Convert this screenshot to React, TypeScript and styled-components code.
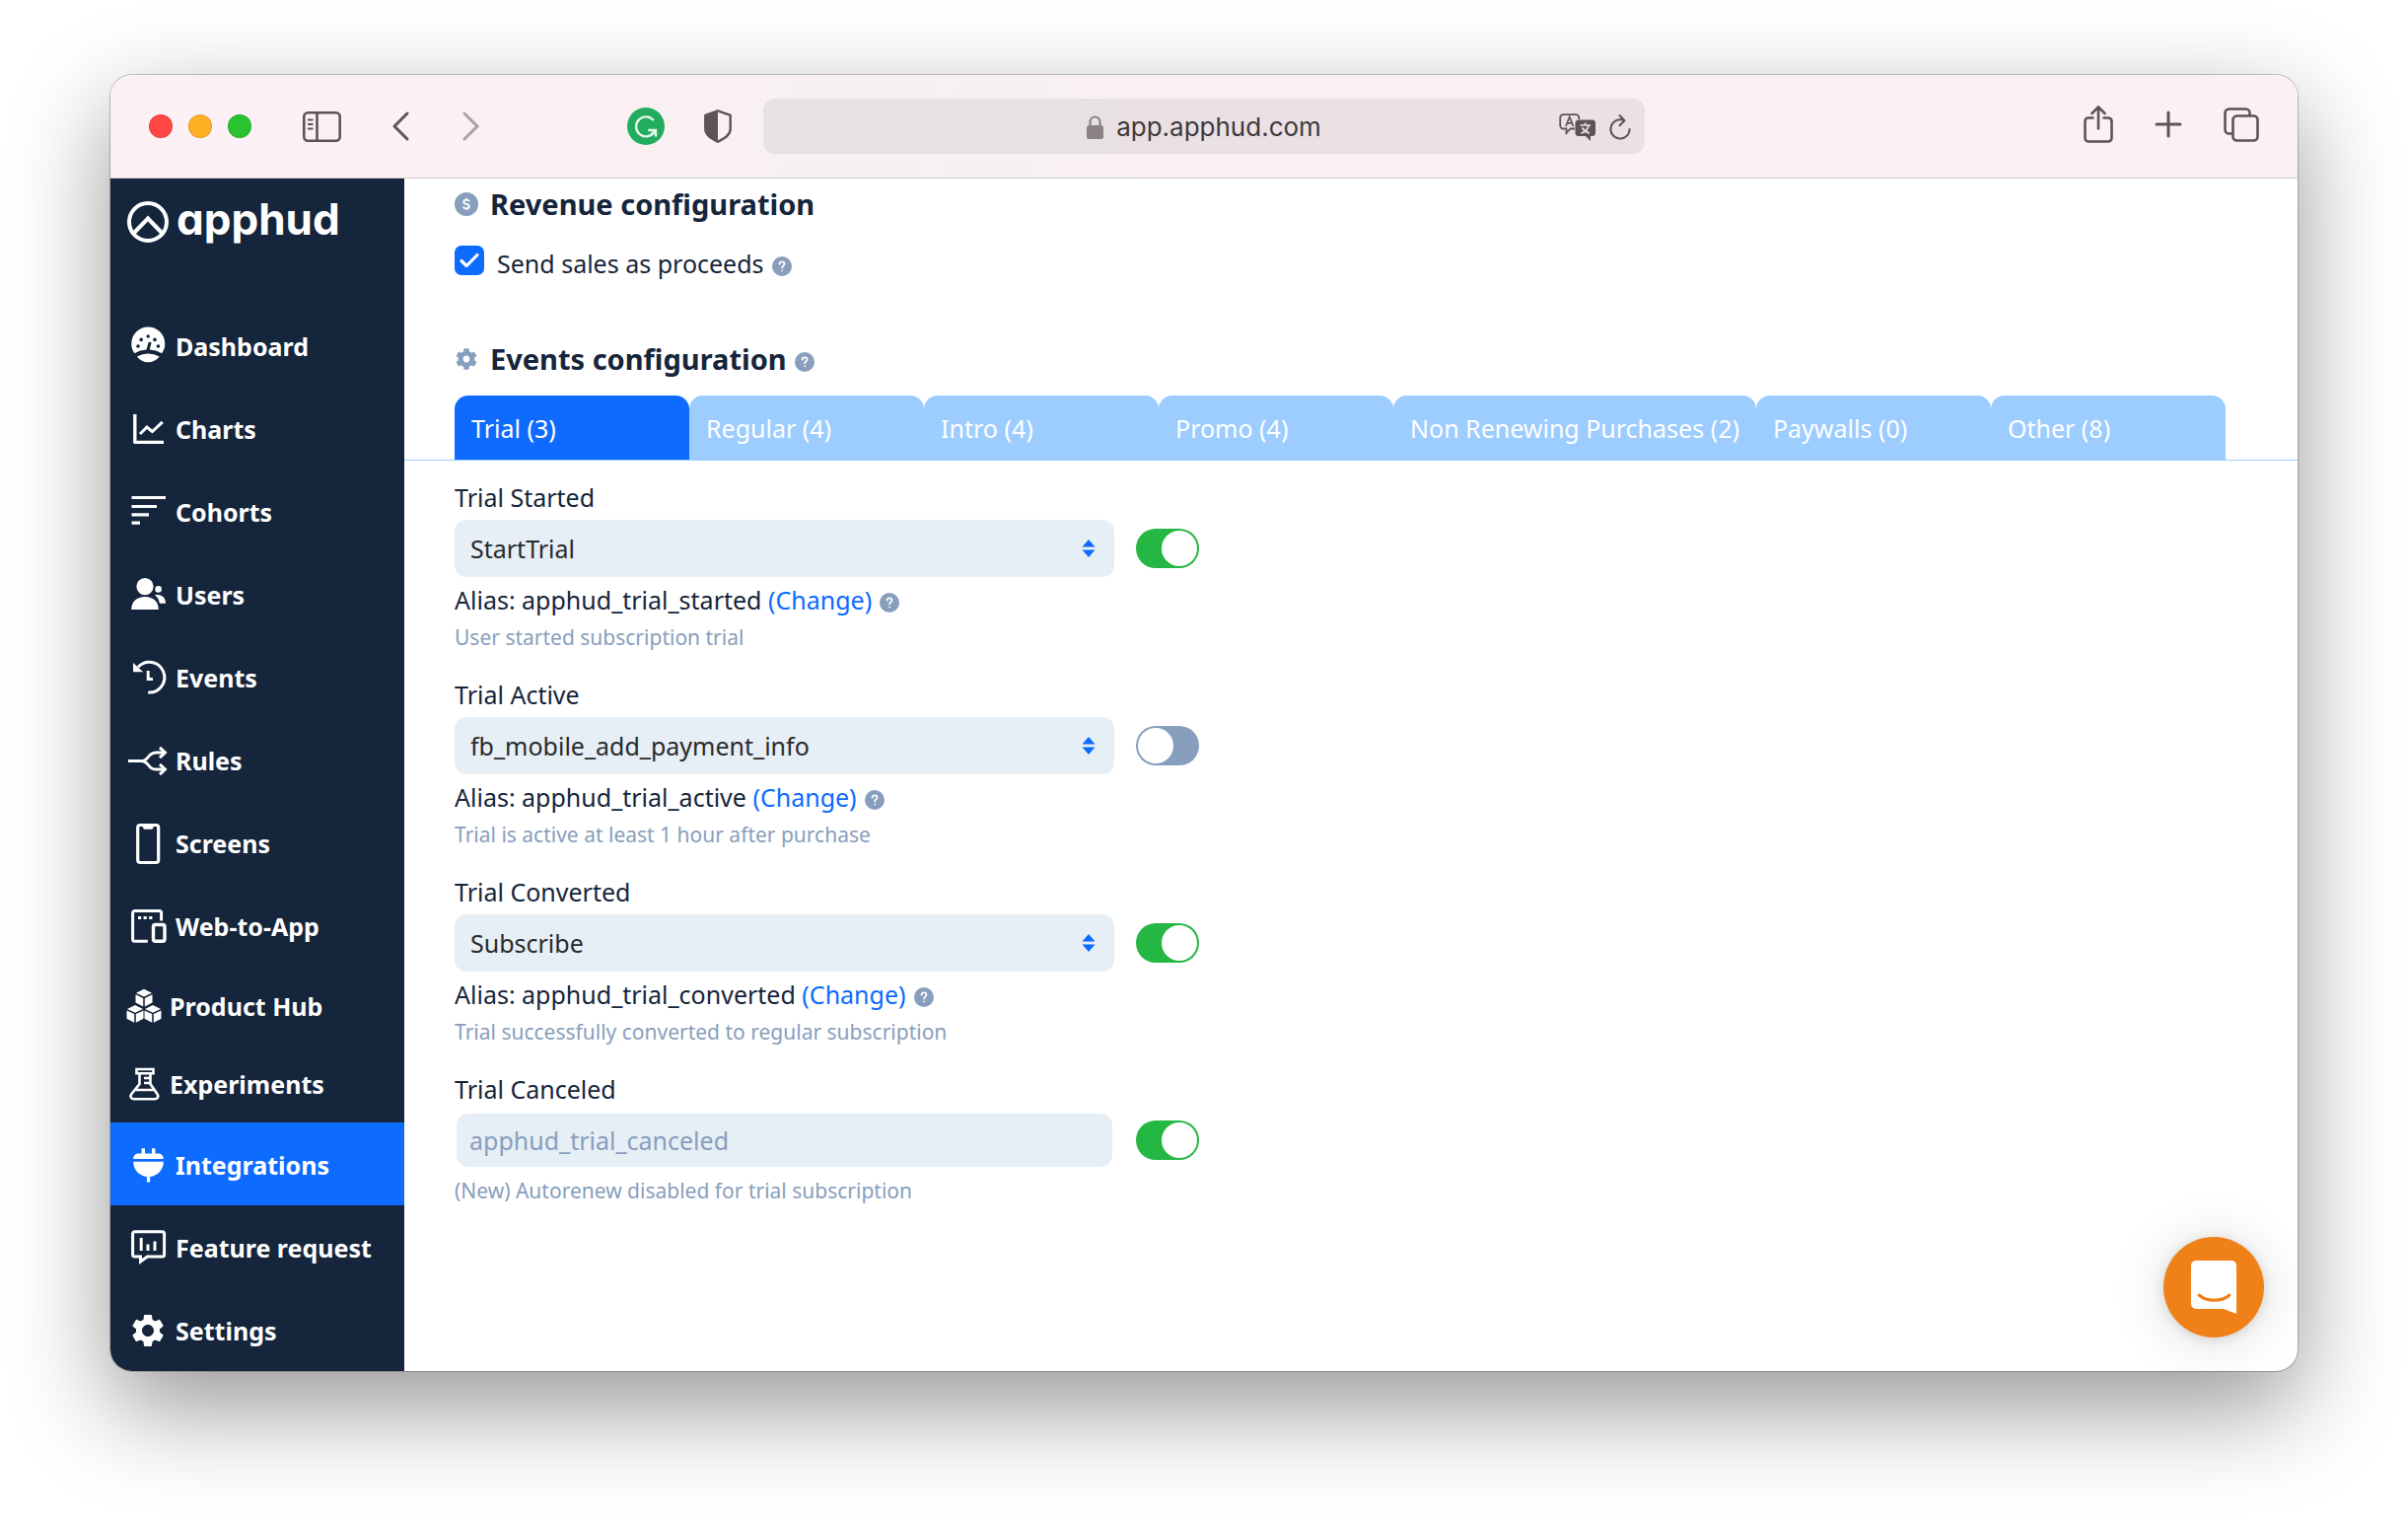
import React from 'react';
import styled, { createGlobalStyle } from 'styled-components';
import { MdSettings } from 'react-icons/md';
import { FaCog } from 'react-icons/fa';

const color = {
  navy: '#15253b',
  blue: '#0d6bff',
  lightBlue: '#9dccff',
  field: '#e6eef6',
  muted: '#889ebd',
  green: '#24b743',
  orange: '#f08018',
  chrome: '#fbf0f4',
  chromeIcon: '#5c5456',
};

const GlobalStyle = createGlobalStyle`
  *, *::before, *::after { box-sizing: border-box; }
  body {
    margin: 0;
    background: #fff;
    color: ${color.navy};
    font-family: "Noto Sans", "Open Sans", sans-serif;
    font-size: 25px;
    line-height: 32px;
  }
  button, input, select { font: inherit; }
  svg { display: block; flex: none; overflow: visible; }
`;

const Desktop = styled.div`
  padding: 76px 112px 148px;
`;

const BrowserWindow = styled.div`
  overflow: hidden;
  border-radius: 22px;
  background: #fff;
  box-shadow: 0 0 0 1px rgba(0, 0, 0, 0.22), 0 36px 100px rgba(0, 0, 0, 0.42);
`;

const Toolbar = styled.header`
  display: grid;
  grid-template-columns: 1fr minmax(0, 894px) 1fr;
  column-gap: 32px;
  align-items: center;
  height: 105px;
  padding: 0 39px;
  border-bottom: 1px solid #cfcacc;
  background: linear-gradient(100deg, ${color.chrome} 15%, #faf0f1 24%, #f6f1f3 38%, ${color.chrome} 50%);
  color: ${color.chromeIcon};
`;

const ToolGroup = styled.div<{ $gap: number }>`
  display: flex;
  align-items: center;
  gap: ${(p) => p.$gap}px;
`;

const ToolSide = styled.div<{ $end?: boolean }>`
  display: flex;
  align-items: center;
  justify-content: ${(p) => (p.$end ? 'flex-end' : 'space-between')};
  padding-bottom: ${(p) => (p.$end ? 4 : 0)}px;
`;

const Light = styled.button<{ $fill: string }>`
  width: 24px;
  height: 24px;
  padding: 0;
  border: 1px solid rgba(0, 0, 0, 0.1);
  border-radius: 50%;
  background: ${(p) => p.$fill};
`;

const ToolButton = styled.button<{ $dim?: boolean }>`
  padding: 0;
  border: 0;
  background: none;
  color: inherit;
  opacity: ${(p) => (p.$dim ? 0.5 : 1)};
`;

const AddressBar = styled.div`
  display: grid;
  grid-template-columns: 1fr auto 1fr;
  align-items: center;
  height: 56px;
  padding: 2px 14px 0;
  border-radius: 12px;
  background: linear-gradient(100deg, #e6e1e2 30%, #ebe0e4 50%);
`;

const Address = styled.div`
  grid-column: 2;
  display: flex;
  align-items: center;
  gap: 13px;
  color: #3e393b;
  font-family: Inter, Roboto, sans-serif;
  font-size: 26px;
`;

const AddressTools = styled.div`
  display: flex;
  align-items: center;
  justify-content: flex-end;
  gap: 14px;
`;

const Body = styled.div`
  display: flex;
`;

const Sidebar = styled.aside`
  flex: none;
  width: 298px;
  padding-top: 23px;
  background: ${color.navy};
  color: #fff;
`;

const Logo = styled.a`
  display: flex;
  align-items: flex-start;
  gap: 8px;
  height: 42px;
  margin: 0 0 62px 17px;
  color: #fff;
  font-family: Inter, "Open Sans", sans-serif;
  font-feature-settings: "cv11";
  font-size: 44px;
  font-weight: 700;
  line-height: 36px;
  text-decoration: none;
`;

const NavItem = styled.a<{ $compact?: boolean; $active?: boolean }>`
  display: flex;
  align-items: center;
  gap: ${(p) => (p.$compact ? 8 : 10)}px;
  height: ${(p) => (p.$compact ? 79 : 84)}px;
  padding: ${(p) => (p.$compact ? '0 0 0 16px' : '2px 0 0 20px')};
  background: ${(p) => (p.$active ? color.blue : 'transparent')};
  color: #fff;
  font-weight: 700;
  text-decoration: none;
  white-space: nowrap;
`;

const Main = styled.main`
  position: relative;
  flex: 1;
  min-width: 0;
  padding-top: 6px;
`;

const Section = styled.section`
  padding: 0 51px;
`;

const HeadingRow = styled.div`
  display: flex;
  align-items: center;
  gap: 12px;
  height: 40px;
  color: ${color.muted};
`;

const HeadingIcon = styled.span`
  display: flex;
  justify-content: center;
  width: 24px;
`;

const Heading = styled.h2`
  margin: 0;
  color: ${color.navy};
  font-size: 29px;
  line-height: 40px;
`;

const CheckRow = styled.div`
  display: flex;
  gap: 13px;
  margin: 22px 0 59px;
  line-height: 36px;
`;

const CheckBox = styled.span`
  display: grid;
  place-items: center;
  width: 30px;
  height: 30px;
  > * { grid-area: 1 / 1; }
  > svg { pointer-events: none; }
`;

const CheckInput = styled.input`
  appearance: none;
  width: 30px;
  height: 30px;
  margin: 0;
  border-radius: 7px;
  background: ${color.blue};
`;

const HelpButton = styled.button`
  width: 20px;
  height: 20px;
  margin-left: 8px;
  padding: 0;
  border: 0;
  border-radius: 50%;
  background: ${color.muted};
  vertical-align: middle;
`;

const Tabs = styled.div`
  display: flex;
  height: 66px;
  margin-top: 17px;
  padding: 0 51px;
  border-bottom: 1px solid ${color.lightBlue};
`;

const Tab = styled.button<{ $active?: boolean }>`
  min-width: 238px;
  padding: 0 17px;
  border: 0;
  border-radius: 14px 14px 0 0;
  background: ${(p) => (p.$active ? color.blue : color.lightBlue)};
  color: #fff;
  text-align: left;
  white-space: nowrap;
`;

const EventList = styled.div`
  display: flex;
  flex-direction: column;
  gap: 27px;
  padding: 21px 51px;
`;

const EventBlock = styled.div`
  display: flex;
  flex-direction: column;
  gap: 7px;
`;

const ControlRow = styled.div`
  display: flex;
  align-items: center;
  gap: 22px;
  height: 58px;
`;

const SelectBox = styled.div`
  display: grid;
  align-items: center;
  width: 669px;
  > * { grid-area: 1 / 1; }
  > svg { justify-self: end; margin-right: 19px; pointer-events: none; }
`;

const Select = styled.select`
  appearance: none;
  width: 100%;
  height: 58px;
  padding: 0 16px;
  border: 0;
  border-radius: 12px;
  background: ${color.field};
  color: #2a2a2a;
`;

const InputBox = styled.div`
  width: 669px;
  padding: 0 2px;
`;

const TextInput = styled.input`
  display: block;
  width: 100%;
  height: 54px;
  padding: 0 13px;
  border: 0;
  border-radius: 12px;
  background: ${color.field};
  &::placeholder { color: ${color.muted}; opacity: 1; }
`;

const Toggle = styled.input`
  appearance: none;
  display: flex;
  width: 64px;
  height: 40px;
  margin: 0;
  padding: 2px;
  border-radius: 20px;
  background: ${color.muted};
  &::before {
    content: "";
    width: 36px;
    height: 36px;
    border-radius: 50%;
    background: #fff;
  }
  &:checked { justify-content: flex-end; background: ${color.green}; }
`;

const Change = styled.a`
  color: ${color.blue};
  text-decoration: none;
`;

const Description = styled.div`
  color: ${color.muted};
  font-size: 21px;
  line-height: 30px;
`;

const ChatButton = styled.button`
  position: absolute;
  right: 34px;
  bottom: 34px;
  display: grid;
  place-items: center;
  width: 102px;
  height: 102px;
  padding: 0;
  border: 0;
  border-radius: 50%;
  background: ${color.orange};
  box-shadow: 0 2px 12px rgba(0, 0, 0, 0.12), 0 4px 56px rgba(0, 0, 0, 0.14);
`;

const QuestionGlyph = () => (
  <svg width="20" height="20" viewBox="0 0 20 20" fill="none" stroke="#fff" strokeWidth="1.8" strokeLinecap="round">
    <path d="M7.6 7.6c.1-1.5 1.1-2.3 2.5-2.3s2.4.9 2.4 2.2c0 1.8-2.3 1.9-2.3 3.9" />
    <circle cx="10.1" cy="14.4" r=".5" fill="#fff" strokeWidth="1" />
  </svg>
);

const Help = () => (
  <HelpButton type="button" aria-label="Help">
    <QuestionGlyph />
  </HelpButton>
);

const Icon = ({ children }: { children: React.ReactNode }) => (
  <svg width="36" height="36" viewBox="0 0 36 36" fill="none" stroke="#fff" strokeWidth="3">
    {children}
  </svg>
);

const icons: Record<string, React.ReactNode> = {
  dashboard: (
    <Icon>
      <path
        d="M4.3 25.2A17 17 0 1 1 32.2 25.2Q26 21.9 19.7 21.6L20.6 14.4 18.6 14 16.6 21.6Q10 21.9 4.3 25.2z"
        fill="#fff"
        stroke="none"
      />
      <path d="M6.8 28.4Q18.2 22.6 29.7 28.4Q25 34.2 18.2 34.2T6.8 28.4z" fill="#fff" stroke="none" />
      <path d="M20.4 14l-2.600 9" stroke={color.navy} strokeWidth="2.600" />
      <path d="M4 27.400Q18.200 19.400 32.400 27.400" stroke={color.navy} strokeWidth="2.200" />
      <g fill={color.navy} stroke="none">
        <circle cx="8" cy="18" r="1.8" />
        <circle cx="11.2" cy="11.4" r="1.8" />
        <circle cx="18.2" cy="8" r="1.8" />
        <circle cx="25" cy="11.4" r="1.8" />
        <circle cx="28.4" cy="18" r="1.8" />
      </g>
    </Icon>
  ),
  charts: (
    <Icon>
      <path d="M4.8 3v28.4H34" strokeWidth="3.4" strokeLinejoin="round" />
      <path d="M10 23l7-7 5.4 4.6 10.4-9.8" />
    </Icon>
  ),
  cohorts: (
    <Icon>
      <path d="M1.5 3.5H36M1.5 12.5H27M1.5 20.8H19M1.5 29.2H10" strokeWidth="3.2" />
    </Icon>
  ),
  users: (
    <Icon>
      <g fill="#fff" stroke="none">
        <circle cx="15" cy="9.6" r="8.6" />
        <path d="M1.2 33c0-8 5.6-13 13.8-13s13.8 5 13.8 13z" />
        <circle cx="28.6" cy="12.4" r="3.3" />
        <path d="M25 18.2c6.800-1.400 11 2.400 11 8.600h-6.200c-.4-3.600-2-6.400-4.800-8.600z" />
      </g>
    </Icon>
  ),
  events: (
    <Icon>
      <path d="M8 7.300A15.400 15.400 0 1 1 18.200 33" />
      <path d="M3 3l10.200 9.200H3z" fill="#fff" stroke="none" />
      <path d="M18.200 11v8.500H23" />
    </Icon>
  ),
  rules: (
    <Icon>
      <path d="M-2 18.500h13c9 0 6-8.500 15-8.500h8M11 18.500c9 0 6 8.500 15 8.500h8" />
      <path d="M30 4.800l5.400 5.200-5.400 5.200M30 21.800l5.400 5.200-5.400 5.200" />
    </Icon>
  ),
  screens: (
    <Icon>
      <rect x="7.700" y="-.5" width="21" height="38" rx="2.500" strokeWidth="3.200" />
      <path d="M12 0h12.500l-2 3.800h-8.500z" fill="#fff" stroke="none" />
    </Icon>
  ),
  web: (
    <Icon>
      <path d="M17.800 33.200H4.600a2 2 0 0 1-2-2V4.600a2 2 0 0 1 2-2h25a2 2 0 0 1 2 2v8" />
      <rect x="23.500" y="16.500" width="11.500" height="16.700" rx="2" strokeWidth="3.400" />
      <path d="M8 9.600h3.200M13.600 9.600h3.200M19.200 9.600h3.200" strokeWidth="3" />
    </Icon>
  ),
  cubes: (
    <Icon>
      <g fill="#fff" stroke="none">
        {[
          [18, 0.8],
          [9, 17],
          [27, 17],
        ].map(([x, y]) => (
          <g key={x} transform={`translate(${x} ${y})`}>
            <path d="M0 0l8 3.900-8 3.900-8-3.900z" />
            <path d="M-8.500 5.400l7.700 3.700v8.600l-7.700-3.900zM8.500 5.400L.8 9.100v8.600l7.700-3.900z" />
          </g>
        ))}
      </g>
    </Icon>
  ),
  flask: (
    <Icon>
      <path d="M10.500 3h17v4.200h-17zM13.500 7.500v10.500L5.400 28c-1.800 2.400-.6 5.200 2.200 5.200h21.600c2.800 0 4-2.800 2.200-5.200L24.500 18V7.500M9.500 24h18.500" strokeWidth="2.600" />
      <path d="M18 12h6M18 17h6" strokeWidth="2.400" />
    </Icon>
  ),
  plug: (
    <Icon>
      <g fill="#fff" stroke="none">
        <path d="M3.200 12c0-3.600 2.200-5.600 5.800-5.600h2.600V1.200h3.400v5.200h7V1.200h3.400v5.200h2.600c3.600 0 5.800 2 5.800 5.600z" />
        <path d="M3.200 14.800h30.600c0 8-5.600 14.400-13.700 15.200v5.400h-3.200V30C8.800 29.200 3.200 22.800 3.200 14.800z" />
      </g>
    </Icon>
  ),
  feature: (
    <Icon>
      <path d="M4.600 1.700h28a2 2 0 0 1 2 2v21.400a2 2 0 0 1-2 2H17.500L10.500 32v-4.900H4.600a2 2 0 0 1-2-2V3.700a2 2 0 0 1 2-2z" />
      <path d="M11.200 8v13M18 14.600V21M25 11.500V21" />
    </Icon>
  ),
  settings: <MdSettings size={36} viewBox="1.2 1.2 21.6 21.6" />,
};

type NavEntry = { label: string; icon: string; compact?: boolean; active?: boolean };

const nav: NavEntry[] = [
  { label: 'Dashboard', icon: 'dashboard' },
  { label: 'Charts', icon: 'charts' },
  { label: 'Cohorts', icon: 'cohorts' },
  { label: 'Users', icon: 'users' },
  { label: 'Events', icon: 'events' },
  { label: 'Rules', icon: 'rules' },
  { label: 'Screens', icon: 'screens' },
  { label: 'Web-to-App', icon: 'web' },
  { label: 'Product Hub', icon: 'cubes', compact: true },
  { label: 'Experiments', icon: 'flask', compact: true },
  { label: 'Integrations', icon: 'plug', active: true },
  { label: 'Feature request', icon: 'feature' },
  { label: 'Settings', icon: 'settings' },
];

const tabs = [
  'Trial (3)',
  'Regular (4)',
  'Intro (4)',
  'Promo (4)',
  'Non Renewing Purchases (2)',
  'Paywalls (0)',
  'Other (8)',
];

type EventEntry = { id: string; title: string; value?: string; on: boolean; description: string };

const events: EventEntry[] = [
  { id: 'apphud_trial_started', title: 'Trial Started', value: 'StartTrial', on: true, description: 'User started subscription trial' },
  { id: 'apphud_trial_active', title: 'Trial Active', value: 'fb_mobile_add_payment_info', on: false, description: 'Trial is active at least 1 hour after purchase' },
  { id: 'apphud_trial_converted', title: 'Trial Converted', value: 'Subscribe', on: true, description: 'Trial successfully converted to regular subscription' },
  { id: 'apphud_trial_canceled', title: 'Trial Canceled', on: true, description: '(New) Autorenew disabled for trial subscription' },
];

const EventSetting = ({ event }: { event: EventEntry }) => (
  <EventBlock>
    <label htmlFor={event.id}>{event.title}</label>
    <ControlRow>
      {event.value ? (
        <SelectBox>
          <Select id={event.id} defaultValue={event.value}>
            <option>{event.value}</option>
          </Select>
          <svg width="14" height="18" viewBox="0 0 14 18" fill={color.blue}>
            <path d="M7 0l6.500 7.500H.5zM7 18l6.500-7.500H.5z" />
          </svg>
        </SelectBox>
      ) : (
        <InputBox>
          <TextInput id={event.id} placeholder={event.id} />
        </InputBox>
      )}
      <Toggle type="checkbox" role="switch" aria-label={event.title} defaultChecked={event.on} />
    </ControlRow>
    {event.value && (
      <div>
        Alias: {event.id} <Change href="#change">(Change)</Change>
        <Help />
      </div>
    )}
    <Description>{event.description}</Description>
  </EventBlock>
);

const BrowserToolbar = () => (
  <Toolbar>
    <ToolSide>
      <ToolGroup $gap={52}>
        <ToolGroup $gap={16}>
          <Light $fill="#ff4645" aria-label="Close" />
          <Light $fill="#fdb024" aria-label="Minimize" />
          <Light $fill="#29c231" aria-label="Zoom" />
        </ToolGroup>
        <ToolButton aria-label="Sidebar">
          <svg width="39" height="31" viewBox="0 0 39 31" fill="none" stroke="currentColor" strokeWidth="2.600">
            <rect x="1.300" y="1.300" width="36.400" height="28.400" rx="4" />
            <path d="M14.500 1.300v28.400" />
            <path d="M5 8.500h5.500M5 13h5.500M5 17.500h5.500" strokeWidth="2" />
          </svg>
        </ToolButton>
        <ToolGroup $gap={54}>
          <ToolButton aria-label="Back">
            <svg width="17" height="30" viewBox="0 0 17 30" fill="none" stroke="currentColor" strokeWidth="3" strokeLinecap="round" strokeLinejoin="round">
              <path d="M15 2L2 15l13 13" />
            </svg>
          </ToolButton>
          <ToolButton aria-label="Forward" $dim>
            <svg width="17" height="30" viewBox="0 0 17 30" fill="none" stroke="currentColor" strokeWidth="3" strokeLinecap="round" strokeLinejoin="round">
              <path d="M2 2l13 13L2 28" />
            </svg>
          </ToolButton>
        </ToolGroup>
      </ToolGroup>
      <ToolGroup $gap={40}>
        <ToolButton aria-label="Grammarly">
          <svg width="38" height="38" viewBox="0 0 38 38">
            <circle cx="19" cy="19" r="19" fill="#22ad5e" />
            <path d="M26.800 13A10 10 0 1 0 27 25.500" fill="none" stroke="#e9f7ef" strokeWidth="2.400" />
            <path d="M21.300 23h7.700v6.500M28.500 23.500l-4 4" fill="none" stroke="#e9f7ef" strokeWidth="2.400" />
          </svg>
        </ToolButton>
        <ToolButton aria-label="Privacy report">
          <svg width="28" height="34" viewBox="0 0 28 34">
            <path d="M14 1.300l12.700 4.500v14c0 6-6 9.500-12.700 12.900C7.300 29.300 1.300 25.800 1.300 19.800v-14z" fill="none" stroke="currentColor" strokeWidth="2.400" strokeLinejoin="round" />
            <path d="M14 1.300v31.400C7.300 29.300 1.300 25.800 1.300 19.800v-14z" fill="currentColor" />
          </svg>
        </ToolButton>
      </ToolGroup>
    </ToolSide>
    <AddressBar>
      <Address>
        <svg width="17" height="24" viewBox="0 0 17 24">
          <rect y="10" width="17" height="14" rx="2.500" fill="#8a8284" />
          <path d="M3.500 11V6.500a5 5 0 0 1 10 0V11" fill="none" stroke="#8a8284" strokeWidth="2.200" />
        </svg>
        app.apphud.com
      </Address>
      <AddressTools>
        <ToolButton aria-label="Translate">
          <svg width="37" height="28" viewBox="0 0 37 28">
            <path d="M16 15.500H11.500L7.500 20v-4.500H4.500a3.300 3.300 0 0 1-3.300-3.300V4.500a3.300 3.300 0 0 1 3.300-3.300h12.500a3.300 3.300 0 0 1 3.300 3.300V6" fill="none" stroke="currentColor" strokeWidth="1.800" />
            <path d="M7 13l3.700-9.500 3.800 9.500M8.300 9.800h4.800" fill="none" stroke="currentColor" strokeWidth="1.700" />
            <path d="M20 6.500h13.500A3.500 3.500 0 0 1 37 10v9.500a3.500 3.500 0 0 1-3.500 3.500H32v5l-5-5h-7a3.500 3.500 0 0 1-3.500-3.500V10A3.500 3.500 0 0 1 20 6.500z" fill="currentColor" />
            <path d="M21.500 12h10.500M26.700 9.500V12M23.500 14.500c1.500 2.500 4 4.500 7.500 5.500M30 12.500c-1 4-4 6.500-7.500 7.500" fill="none" stroke="#ebe0e4" strokeWidth="1.700" />
          </svg>
        </ToolButton>
        <ToolButton aria-label="Reload">
          <svg width="22" height="26" viewBox="0 0 22 26" fill="none" stroke="currentColor" strokeWidth="2" strokeLinecap="round" strokeLinejoin="round">
            <path d="M15 6.200A9.600 9.600 0 1 0 20.600 15M10.500 1l5 5.200-5 5" />
          </svg>
        </ToolButton>
      </AddressTools>
    </AddressBar>
    <ToolSide $end>
      <ToolGroup $gap={42}>
        <ToolButton aria-label="Share">
          <svg width="30" height="38" viewBox="0 0 30 38" fill="none" stroke="currentColor" strokeWidth="2.600" strokeLinecap="round" strokeLinejoin="round">
            <path d="M9.500 12.500H5a3.500 3.500 0 0 0-3.500 3.500v17A3.500 3.500 0 0 0 5 36.500h20a3.500 3.500 0 0 0 3.500-3.500V16a3.500 3.500 0 0 0-3.500-3.500h-4.500M15 23.500V1.500M8.500 8L15 1.500 21.500 8" />
          </svg>
        </ToolButton>
        <ToolButton aria-label="New tab">
          <svg width="28" height="28" viewBox="0 0 28 28" fill="none" stroke="currentColor" strokeWidth="3" strokeLinecap="round">
            <path d="M14 2v24M2 14h24" />
          </svg>
        </ToolButton>
        <ToolButton aria-label="Tab overview">
          <svg width="36" height="35" viewBox="0 0 36 35" fill="none" stroke="currentColor" strokeWidth="2.600" strokeLinejoin="round">
            <rect x="9.500" y="8.500" width="25" height="25" rx="4" />
            <path d="M9.500 26.500H5.500a4 4 0 0 1-4-4V5.500a4 4 0 0 1 4-4h17a4 4 0 0 1 4 4v3" />
          </svg>
        </ToolButton>
      </ToolGroup>
    </ToolSide>
  </Toolbar>
);

export default function App() {
  return (
    <Desktop>
      <GlobalStyle />
      <BrowserWindow>
        <BrowserToolbar />
        <Body>
          <Sidebar>
            <Logo href="#home">
              <svg width="42" height="42" viewBox="0 0 42 42" fill="none" stroke="#fff" strokeWidth="4">
                <circle cx="21" cy="21" r="19" />
                <path d="M6.500 32.500L21 17.500l14.500 15" />
              </svg>
              apphud
            </Logo>
            <nav>
              {nav.map((item) => (
                <NavItem key={item.label} href={`#${item.icon}`} $compact={item.compact} $active={item.active}>
                  {icons[item.icon]}
                  {item.label}
                </NavItem>
              ))}
            </nav>
          </Sidebar>
          <Main>
            <Section>
              <HeadingRow>
                <HeadingIcon>
                  <svg width="24" height="24" viewBox="0 0 24 24">
                    <circle cx="12" cy="12" r="12" fill={color.muted} />
                    <path d="M15 9.200c-.6-1-1.600-1.500-3-1.500-3.600 0-3.600 3.600-.2 4.200 4 .6 3.900 4.500 0 4.500-1.600 0-2.600-.6-3.200-1.600M12 6v1.800M12 16.300V18" fill="none" stroke="#fff" strokeWidth="1.800" />
                  </svg>
                </HeadingIcon>
                <Heading>Revenue configuration</Heading>
              </HeadingRow>
              <CheckRow>
                <CheckBox>
                  <CheckInput id="proceeds" type="checkbox" defaultChecked />
                  <svg width="20" height="16" viewBox="0 0 20 16" fill="none" stroke="#fff" strokeWidth="3.200" strokeLinecap="round" strokeLinejoin="round">
                    <path d="M2 8.500L7.200 13.500 18 2.500" />
                  </svg>
                </CheckBox>
                <div>
                  <label htmlFor="proceeds">Send sales as proceeds</label>
                  <Help />
                </div>
              </CheckRow>
              <HeadingRow>
                <HeadingIcon>
                  <FaCog size={22} />
                </HeadingIcon>
                <Heading>
                  Events configuration
                  <Help />
                </Heading>
              </HeadingRow>
            </Section>
            <Tabs role="tablist">
              {tabs.map((label, i) => (
                <Tab key={label} type="button" role="tab" aria-selected={i === 0} $active={i === 0}>
                  {label}
                </Tab>
              ))}
            </Tabs>
            <EventList>
              {events.map((event) => (
                <EventSetting key={event.id} event={event} />
              ))}
            </EventList>
            <ChatButton type="button" aria-label="Open chat">
              <svg width="46" height="54" viewBox="0 0 46 54">
                <path d="M5 0h36a5 5 0 0 1 5 5v49l-13-5H5a5 5 0 0 1-5-5V5a5 5 0 0 1 5-5z" fill="#fff" />
                <path d="M8 35c8 7 23 7 31 0" fill="none" stroke={color.orange} strokeWidth="3" strokeLinecap="round" />
              </svg>
            </ChatButton>
          </Main>
        </Body>
      </BrowserWindow>
    </Desktop>
  );
}
